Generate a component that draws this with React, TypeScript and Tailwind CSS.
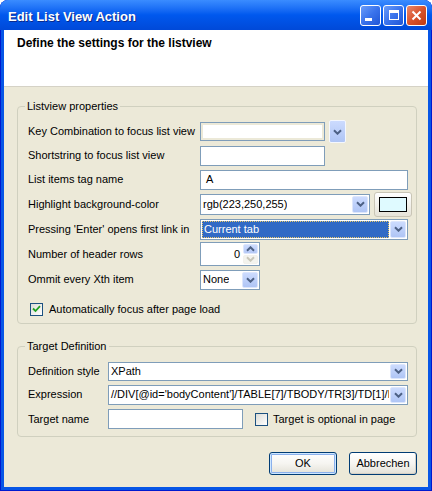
import React from "react";

const box = "border border-[#7F9DB9] bg-white";

function Chevron({ up = false, color = "#4D6185" }: { up?: boolean; color?: string }) {
	return (
		<svg width="9" height="6" viewBox="0 0 9 6">
			<path
				d={up ? "M1 4.8 L4.5 1.3 L8 4.8" : "M1 1.2 L4.5 4.7 L8 1.2"}
				fill="none"
				stroke={color}
				strokeWidth="2"
			/>
		</svg>
	);
}

function ArrowBtn({ className = "" }: { className?: string }) {
	return (
		<div
			className={`flex items-center justify-center rounded-[2px] border border-[#DCE6FC] bg-linear-to-b from-[#CCDBFE] to-[#AFC5F5] ${className}`}
		>
			<Chevron />
		</div>
	);
}

function Combo({
	className,
	text,
	selected = false,
}: {
	className: string;
	text: string;
	selected?: boolean;
}) {
	return (
		<div className={`flex p-[1px] ${box} ${className}`}>
			<div className="flex-1 min-w-0 flex items-center pr-[1px]">
				{selected ? (
					<div className="h-full w-full flex items-center border border-dotted border-[#E9C868] bg-[#316AC5] text-white pl-[1px] whitespace-nowrap">
						{text}
					</div>
				) : (
					<div className="pl-[1px] whitespace-nowrap overflow-hidden">{text}</div>
				)}
			</div>
			<ArrowBtn className="w-[16px] shrink-0" />
		</div>
	);
}

function Check({ checked = false }: { checked?: boolean }) {
	return (
		<div className="w-[13px] h-[13px] shrink-0 border border-[#1C5180] bg-linear-to-br from-[#DCDCD7] to-white flex items-center justify-center">
			{checked && (
				<svg width="9" height="8" viewBox="0 0 9 8">
					<path d="M1 3.5 L3.5 6 L8 1.2" fill="none" stroke="#21A121" strokeWidth="1.8" />
				</svg>
			)}
		</div>
	);
}

function Group({
	title,
	className = "",
	children,
}: {
	title: string;
	className?: string;
	children: React.ReactNode;
}) {
	return (
		<div className={`relative rounded-[4px] border border-[#D0D0BF] ${className}`}>
			<span className="absolute left-[7px] top-[-7px] bg-[#ECE9D8] px-[2px] leading-[13px]">
				{title}
			</span>
			{children}
		</div>
	);
}

function XPButton({ label, isDefault = false }: { label: string; isDefault?: boolean }) {
	return (
		<button
			className={`w-[68px] h-[23px] rounded-[3px] border border-[#003C74] bg-linear-to-b from-white via-[#F6F5F1] to-[#E3E1D7] text-[11px] text-black ${
				isDefault
					? "shadow-[inset_0_0_0_1px_#CEE7FF,inset_0_0_0_2px_#8AB0EC]"
					: "shadow-[inset_-1px_-1px_0_#D6D0C5]"
			}`}
		>
			{label}
		</button>
	);
}

function TitleBtn({ kind }: { kind: "min" | "max" | "close" }) {
	const bg =
		kind === "close"
			? "bg-linear-to-br from-[#E8876A] via-[#D9532C] to-[#C13A10]"
			: "bg-linear-to-br from-[#6A9CF9] via-[#3A73EC] to-[#1F55D6]";
	return (
		<div
			className={`w-[21px] h-[21px] rounded-[3px] border border-white flex items-center justify-center ${bg}`}
		>
			{kind === "min" && <div className="w-[7px] h-[3px] bg-white mt-[9px] mr-[5px]" />}
			{kind === "max" && <div className="w-[10px] h-[10px] border border-white border-t-[3px]" />}
			{kind === "close" && (
				<svg width="11" height="11" viewBox="0 0 11 11">
					<path d="M1.5 1.5 L9.5 9.5 M9.5 1.5 L1.5 9.5" stroke="white" strokeWidth="2" />
				</svg>
			)}
		</div>
	);
}

export default function App() {
	return (
		<div className="w-[432px] h-[491px] bg-white text-[11px] text-black [font-family:'Liberation_Sans',Arial,sans-serif]">
			<div className="h-full flex flex-col rounded-t-[8px] overflow-hidden bg-[#0756E6] shadow-[inset_1px_0_#0019CF,inset_-1px_0_#0019CF,inset_0_-1px_#0019CF]">
				{/* title bar */}
				<div className="h-[30px] shrink-0 flex items-center pl-[8px] pr-[5px] bg-linear-to-b from-[#3A8CFF] via-[#0058EE] to-[#0049D8]">
					<div className="flex-1 pt-[3px] text-[13px] font-bold text-white [text-shadow:1px_1px_0_#0B2A8C]">
						Edit List View Action
					</div>
					<div className="flex gap-[2px]">
						<TitleBtn kind="min" />
						<TitleBtn kind="max" />
						<TitleBtn kind="close" />
					</div>
				</div>

				{/* body */}
				<div className="flex-1 mx-[4px] mb-[4px] flex flex-col bg-[#ECE9D8]">
					<div className="h-[57px] shrink-0 bg-white border-b border-[#D5D2C6] pl-[13px] pt-[6px] text-[12px] font-bold leading-[14px]">
						Define the settings for the listview
					</div>

					<div className="flex-1 flex flex-col pl-[13px] pr-[11px]">
						<Group title="Listview properties" className="mt-[19px] pt-[12px] pb-[4px] pl-[10px]">
							<div className="h-[25px] flex items-center">
								<div className="w-[172px]">Key Combination to focus list view</div>
								<div className="w-[125px] h-[19px] border border-[#7F9DB9] bg-[#ECE9D8] p-[2px]">
									<div className="h-full bg-white" />
								</div>
								<ArrowBtn className="ml-[4px] w-[17px] h-[23px] border-[#F4F7FE]" />
							</div>
							<div className="h-[23px] flex items-center">
								<div className="w-[172px]">Shortstring to focus list view</div>
								<div className={`w-[125px] h-[20px] ${box}`} />
							</div>
							<div className="h-[25px] flex items-center">
								<div className="w-[172px]">List items tag name</div>
								<div className={`w-[208px] h-[20px] flex items-center pl-[5px] ${box}`}>A</div>
							</div>
							<div className="h-[24px] flex items-center">
								<div className="w-[172px]">Highlight background-color</div>
								<Combo className="w-[170px] h-[21px]" text="rgb(223,250,255)" />
								<div className="ml-[4px] w-[38px] h-[25px] rounded-[3px] border border-[#C9C5B6] bg-linear-to-b from-white to-[#E6E3D8] flex items-center justify-center">
									<div className="w-[28px] h-[15px] border border-black bg-[rgb(223,250,255)]" />
								</div>
							</div>
							<div className="h-[26px] flex items-center">
								<div className="w-[172px]">Pressing 'Enter' opens first link in</div>
								<Combo className="w-[208px] h-[21px]" text="Current tab" selected />
							</div>
							<div className="h-[24px] flex items-center">
								<div className="w-[172px]">Number of header rows</div>
								<div className={`w-[60px] h-[24px] flex p-[1px] ${box}`}>
									<div className="flex-1 flex items-center justify-end pr-[3px]">0</div>
									<div className="w-[15px] flex flex-col gap-[1px]">
										<div className="flex-1 rounded-[2px] border border-[#DCE6FC] bg-linear-to-b from-[#CCDBFE] to-[#B4C8F6] flex items-center justify-center">
											<Chevron up />
										</div>
										<div className="flex-1 rounded-[2px] border border-[#F2F1EC] bg-[#F3F3EE] flex items-center justify-center">
											<Chevron color="#C9C7BA" />
										</div>
									</div>
								</div>
							</div>
							<div className="h-[27px] flex items-center">
								<div className="w-[172px]">Ommit every Xth item</div>
								<Combo className="w-[60px] h-[20px]" text="None" />
							</div>
							<div className="mt-[6px] h-[20px] flex items-center pl-[2px] gap-[6px]">
								<Check checked />
								<span>Automatically focus after page load</span>
							</div>
						</Group>

						<Group title="Target Definition" className="mt-[22px] pt-[12px] pb-[4px] pl-[10px]">
							<div className="h-[24px] flex items-center">
								<div className="w-[80px]">Definition style</div>
								<Combo className="w-[300px] h-[19px]" text="XPath" />
							</div>
							<div className="h-[23px] flex items-center">
								<div className="w-[80px]">Expression</div>
								<Combo
									className="w-[300px] h-[20px]"
									text="//DIV[@id='bodyContent']/TABLE[7]/TBODY/TR[3]/TD[1]/I"
								/>
							</div>
							<div className="h-[26px] flex items-center">
								<div className="w-[80px]">Target name</div>
								<div className={`w-[135px] h-[20px] ${box}`} />
								<div className="ml-[12px] flex items-center gap-[5px]">
									<Check />
									<span>Target is optional in page</span>
								</div>
							</div>
						</Group>

						<div className="mt-[15px] flex justify-end gap-[12px]">
							<XPButton label="OK" isDefault />
							<XPButton label="Abbrechen" />
						</div>
					</div>
				</div>
			</div>
		</div>
	);
}
